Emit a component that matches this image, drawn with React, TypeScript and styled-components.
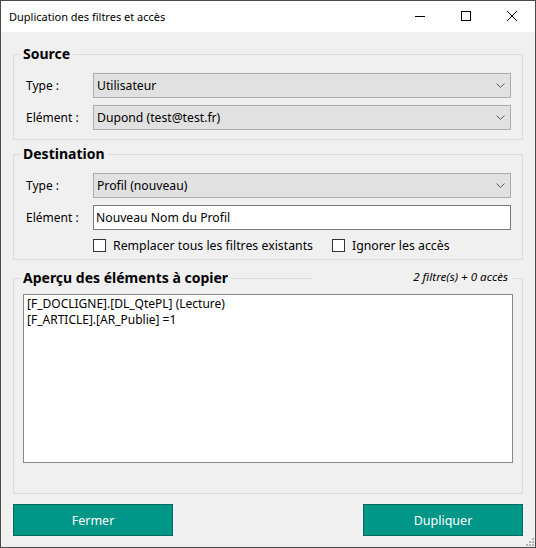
import React from "react";
import styled, { createGlobalStyle } from "styled-components";

const GlobalStyle = createGlobalStyle`
  html, body {
    margin: 0;
    padding: 0;
    background: #1d5c57;
  }
  body {
    font-family: "Noto Sans", "Open Sans", sans-serif;
    color: #000;
  }
  * {
    box-sizing: border-box;
  }
`;

const Window = styled.div`
  position: relative;
  width: 536px;
  height: 548px;
  border: 1px solid #4a4a4a;
  background: #f0f0f0;
  display: flex;
  flex-direction: column;
  overflow: hidden;
`;

const TitleBar = styled.div`
  height: 31px;
  flex-shrink: 0;
  background: #fff;
  display: flex;
  align-items: center;
`;

const Title = styled.span`
  flex: 1;
  padding-left: 8px;
  font-size: 11px;
`;

const CaptionButton = styled.div`
  width: 46px;
  height: 31px;
  display: flex;
  align-items: center;
  justify-content: center;
  padding-bottom: 2px;
`;

const Client = styled.div`
  flex: 1;
  display: flex;
  flex-direction: column;
  padding: 12px 12px 10px;
`;

const Group = styled.fieldset<{ $top: number; $bottom: number }>`
  position: relative;
  margin: ${(p) => p.$top}px 0 0;
  padding: 0 0 ${(p) => p.$bottom}px;
  border: 1px solid #dcdcdc;
  min-width: 0;
`;

const Legend = styled.legend`
  margin-left: 6px;
  padding: 0 3px;
  font-size: 14px;
  font-weight: 700;
  line-height: 20px;
`;

const Count = styled.span`
  position: absolute;
  top: -21px;
  right: 9px;
  width: 200px;
  height: 20px;
  padding-right: 5px;
  background: #f0f0f0;
  font-size: 11.6px;
  font-style: italic;
  line-height: 20px;
  text-align: right;
`;

const Form = styled.div<{ $top: number }>`
  display: grid;
  grid-template-columns: 67px 1fr;
  row-gap: 7px;
  align-items: center;
  padding: ${(p) => p.$top}px 11px 0 12px;
`;

const Label = styled.span`
  font-size: 12px;
`;

const Combo = styled.div`
  height: 25px;
  border: 1px solid #adadad;
  background: #e1e1e1;
  display: flex;
  align-items: center;
  justify-content: space-between;
  padding: 0 5px 0 3px;
  font-size: 12.2px;
`;

const TextInput = styled.input`
  height: 25px;
  border: 1px solid #7a7a7a;
  background: #fff;
  padding: 0 2px;
  font-family: inherit;
  font-size: 12.2px;
  color: #000;
  outline: none;
`;

const CheckRow = styled.div`
  grid-column: 2;
  height: 16px;
  display: flex;
  align-items: center;
  gap: 19px;
`;

const Check = styled.label`
  display: flex;
  align-items: center;
  gap: 7px;
  font-size: 12.3px;
`;

const Box = styled.span`
  width: 13px;
  height: 13px;
  border: 1px solid #333;
  background: #fff;
`;

const Preview = styled.div`
  margin: 6px 9px 0;
  height: 169px;
  border: 1px solid #828790;
  background: #fff;
  padding: 1px 3px;
  font-size: 12px;
  line-height: 16px;
`;

const Actions = styled.div`
  display: flex;
  justify-content: space-between;
  margin-top: 10px;
`;

const Button = styled.button`
  width: 160px;
  height: 32px;
  border: 1px solid #00695c;
  background: #009688;
  color: #fff;
  font-family: inherit;
  font-size: 12.5px;
`;

const Grip = styled.svg`
  position: absolute;
  right: 1px;
  bottom: 1px;
`;

const Chevron = () => (
  <svg width="9" height="5" viewBox="0 0 9 5">
    <polyline points="0.5,0.5 4.5,4.5 8.5,0.5" fill="none" stroke="#5a5a5a" strokeWidth="1" />
  </svg>
);

const ComboBox = ({ value }: { value: string }) => (
  <Combo>
    <span>{value}</span>
    <Chevron />
  </Combo>
);

const CheckBox = ({ label }: { label: string }) => (
  <Check>
    <Box />
    {label}
  </Check>
);

export default function App() {
  return (
    <>
      <GlobalStyle />
      <Window>
        <TitleBar>
          <Title>Duplication des filtres et accès</Title>
          <CaptionButton>
            <svg width="10" height="10" viewBox="0 0 10 10">
              <line x1="0" y1="5.5" x2="10" y2="5.5" stroke="#000" strokeWidth="1" />
            </svg>
          </CaptionButton>
          <CaptionButton>
            <svg width="10" height="10" viewBox="0 0 10 10">
              <rect x="0.5" y="0.5" width="9" height="9" fill="none" stroke="#000" strokeWidth="1" />
            </svg>
          </CaptionButton>
          <CaptionButton>
            <svg width="10" height="10" viewBox="0 0 10 10">
              <path d="M0 0 L10 10 M10 0 L0 10" stroke="#000" strokeWidth="1" />
            </svg>
          </CaptionButton>
        </TitleBar>

        <Client>
          <Group $top={0} $bottom={9}>
            <Legend>Source</Legend>
            <Form $top={9}>
              <Label>Type :</Label>
              <ComboBox value="Utilisateur" />
              <Label>Elément :</Label>
              <ComboBox value="Dupond (test@test.fr)" />
            </Form>
          </Group>

          <Group $top={4} $bottom={6}>
            <Legend>Destination</Legend>
            <Form $top={9}>
              <Label>Type :</Label>
              <ComboBox value="Profil (nouveau)" />
              <Label>Elément :</Label>
              <TextInput defaultValue="Nouveau Nom du Profil" />
              <CheckRow>
                <CheckBox label="Remplacer tous les filtres existants" />
                <CheckBox label="Ignorer les accès" />
              </CheckRow>
            </Form>
          </Group>

          <Group $top={8} $bottom={30}>
            <Legend>Aperçu des éléments à copier</Legend>
            <Count>2 filtre(s) + 0 accès</Count>
            <Preview>
              <div>[F_DOCLIGNE].[DL_QtePL] (Lecture)</div>
              <div>[F_ARTICLE].[AR_Publie] =1</div>
            </Preview>
          </Group>

          <Actions>
            <Button>Fermer</Button>
            <Button>Dupliquer</Button>
          </Actions>
        </Client>

        <Grip width="9" height="9" viewBox="0 0 9 9">
          <g fill="#b4b4b4">
            <rect x="7" y="1" width="2" height="2" />
            <rect x="4" y="4" width="2" height="2" />
            <rect x="7" y="4" width="2" height="2" />
            <rect x="1" y="7" width="2" height="2" />
            <rect x="4" y="7" width="2" height="2" />
            <rect x="7" y="7" width="2" height="2" />
          </g>
        </Grip>
      </Window>
    </>
  );
}
